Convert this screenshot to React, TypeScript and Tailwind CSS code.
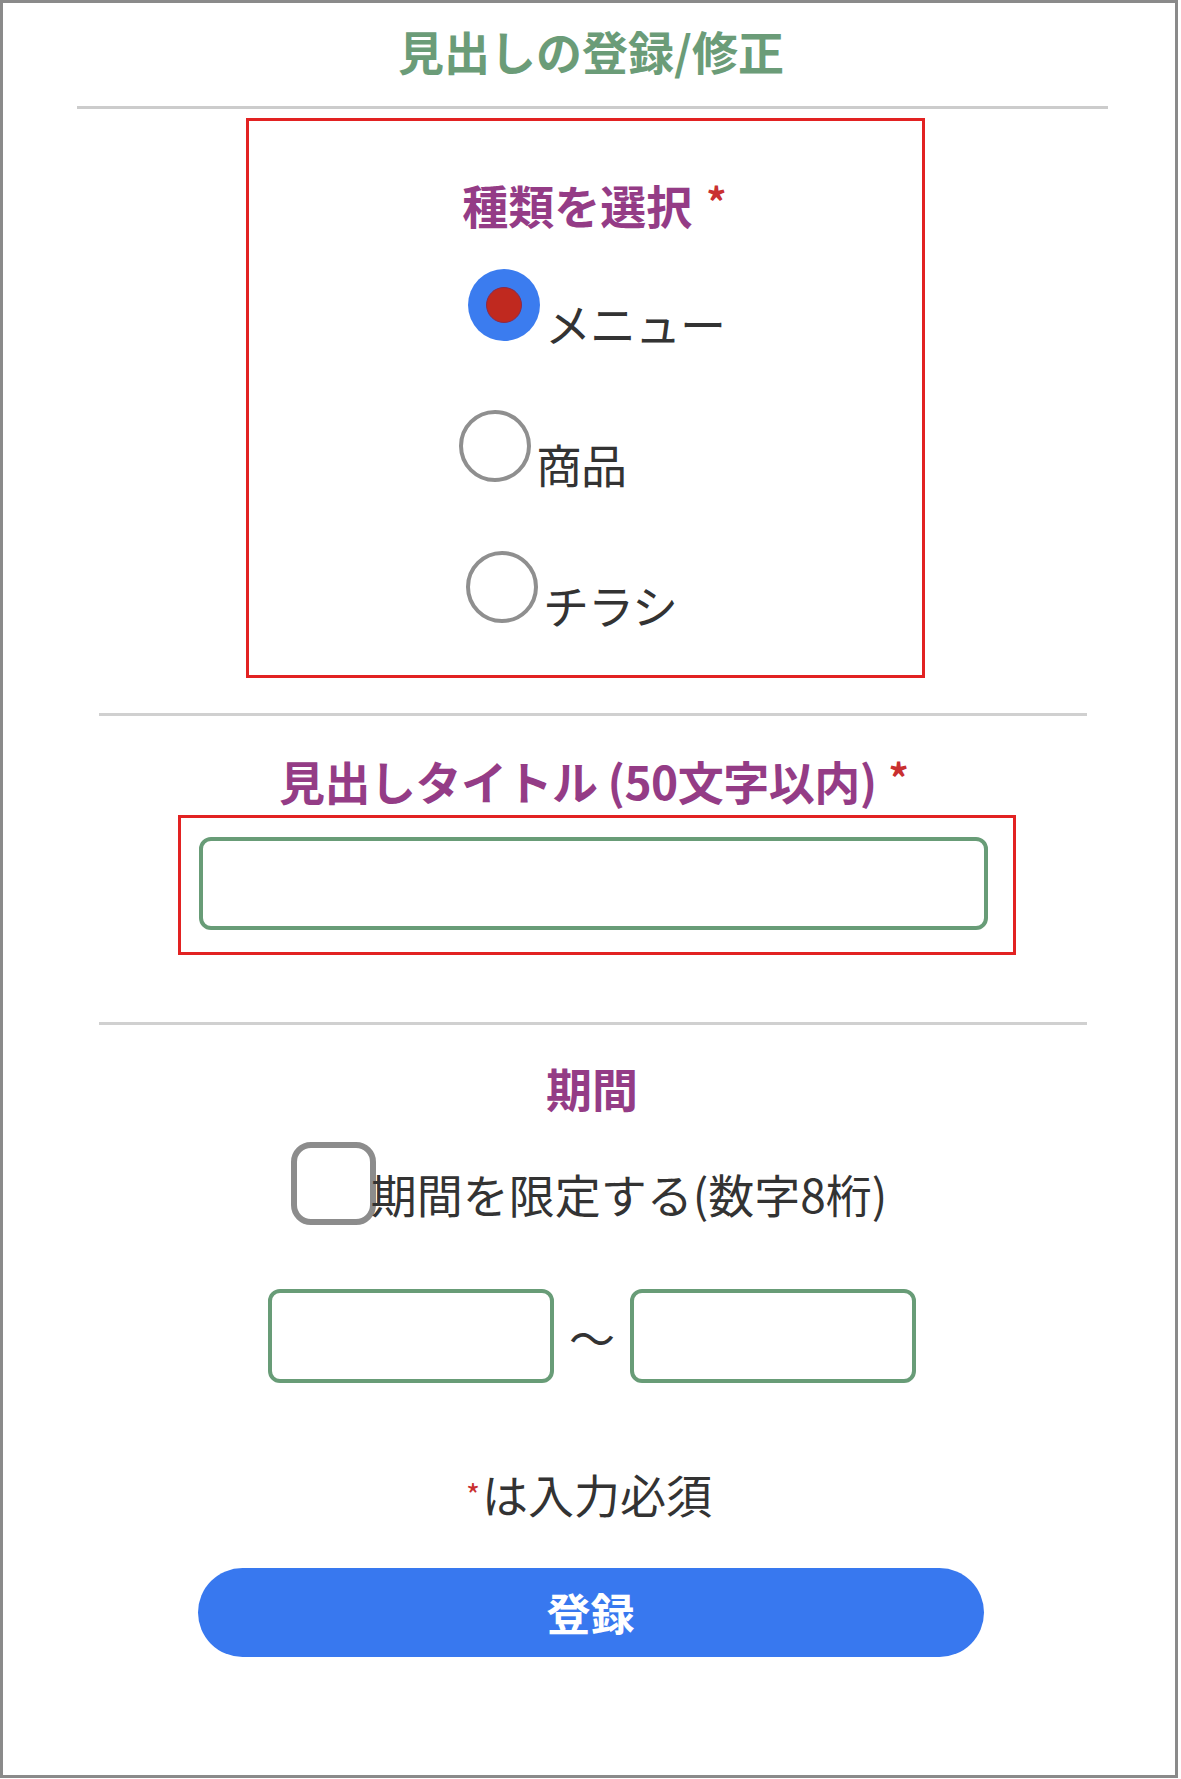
import React from "react";

const FONT = "font-['Noto_Sans_CJK_JP','Noto_Sans',sans-serif]";

function Radio({ checked }: { checked?: boolean }) {
  if (checked) {
    return (
      <div className="w-[72px] h-[72px] rounded-full bg-[#3b7cef] flex items-center justify-center shrink-0">
        <div className="w-[36px] h-[36px] rounded-full bg-[#c0291f] border border-[#8a2a4a]" />
      </div>
    );
  }
  return <div className="w-[72px] h-[72px] rounded-full border-[4px] border-[#8f8f8f] bg-white shrink-0" />;
}

function RadioRow({ label, checked, ml, mt }: { label: string; checked?: boolean; ml: string; mt: string }) {
  return (
    <div className={`flex items-start gap-[5px] ${ml} ${mt}`}>
      <Radio checked={checked} />
      <span className="mt-[30px] text-[46px] leading-[46px] text-[#333333] tracking-[-1px]">{label}</span>
    </div>
  );
}

export default function App() {
  return (
    <div className={`${FONT} w-[1178px] h-[1778px] border-[3px] border-[#8a8a8a] bg-white box-border flex flex-col`}>
      {/* Title */}
      <div className="h-[103px] pb-[10px] flex items-center justify-center">
        <h1 className="text-[46px] leading-[60px] font-bold text-[#6b9c78] ml-[4px]">見出しの登録/修正</h1>
      </div>
      <div className="ml-[74px] w-[1031px] h-[3px] bg-[#cccccc]" />

      {/* Type selection */}
      <div className="ml-[243px] mt-[9px] w-[679px] h-[560px] border-[3px] border-[#e22222] flex flex-col">
        <div className="mt-[53px] h-[60px] flex items-center justify-center ml-[18px]">
          <span className="text-[46px] leading-[60px] font-bold text-[#943c86]">種類を選択</span>
          <span className="ml-[14px] text-[40px] leading-[60px] font-bold text-[#c93030] -mt-[6px]">*</span>
        </div>
        <RadioRow label="メニュー" checked ml="ml-[219px]" mt="mt-[35px]" />
        <RadioRow label="商品" ml="ml-[210px]" mt="mt-[65px]" />
        <RadioRow label="チラシ" ml="ml-[217px]" mt="mt-[65px]" />
      </div>

      <div className="ml-[96px] mt-[35px] w-[988px] h-[3px] bg-[#d0d0d0]" />

      {/* Title input */}
      <div className="mt-[36px] h-[56px] flex items-center justify-center ml-[10px]">
        <span className="text-[46px] leading-[56px] font-bold text-[#943c86] tracking-[-0.5px]">見出しタイトル (50文字以内)</span>
        <span className="ml-[12px] text-[40px] leading-[56px] font-bold text-[#c93030] -mt-[6px]">*</span>
      </div>
      <div className="ml-[175px] mt-[7px] w-[838px] h-[140px] border-[3px] border-[#e22222] pl-[18px] pt-[19px]">
        <div className="w-[789px] h-[93px] rounded-[12px] border-[4px] border-[#689c77] bg-white" />
      </div>

      <div className="ml-[96px] mt-[67px] w-[988px] h-[3px] bg-[#d0d0d0]" />

      {/* Period */}
      <div className="mt-[34px] h-[56px] flex items-center justify-center">
        <span className="text-[46px] leading-[56px] font-bold text-[#943c86] ml-[6px]">期間</span>
      </div>
      <div className="mt-[27px] flex items-start justify-center">
        <div className="w-[85px] h-[83px] rounded-[20px] border-[6px] border-[#8c8c8c] bg-white shrink-0" />
        <span className="-ml-[5px] mt-[23px] text-[46px] leading-[56px] text-[#333333]">期間を限定する(数字8桁)</span>
      </div>
      <div className="mt-[64px] ml-[6px] flex items-center justify-center">
        <div className="w-[286px] h-[94px] rounded-[12px] border-[4px] border-[#689c77] bg-white" />
        <span className="w-[76px] text-center text-[46px] leading-[56px] text-[#333333]">〜</span>
        <div className="w-[286px] h-[94px] rounded-[12px] border-[4px] border-[#689c77] bg-white" />
      </div>

      {/* Required note */}
      <div className="mt-[82px] h-[56px] flex items-center justify-center">
        <span className="text-[30px] leading-[30px] text-[#c93030] mt-[2px] mr-[2px]">*</span>
        <span className="text-[46px] leading-[56px] text-[#333333]">は入力必須</span>
      </div>

      {/* Submit */}
      <div className="mt-[47px] flex justify-center">
        <button className="w-[786px] h-[89px] rounded-full bg-[#3878ef] text-white text-[44px] font-bold leading-[89px] ml-[3px]">
          登録
        </button>
      </div>
    </div>
  );
}
